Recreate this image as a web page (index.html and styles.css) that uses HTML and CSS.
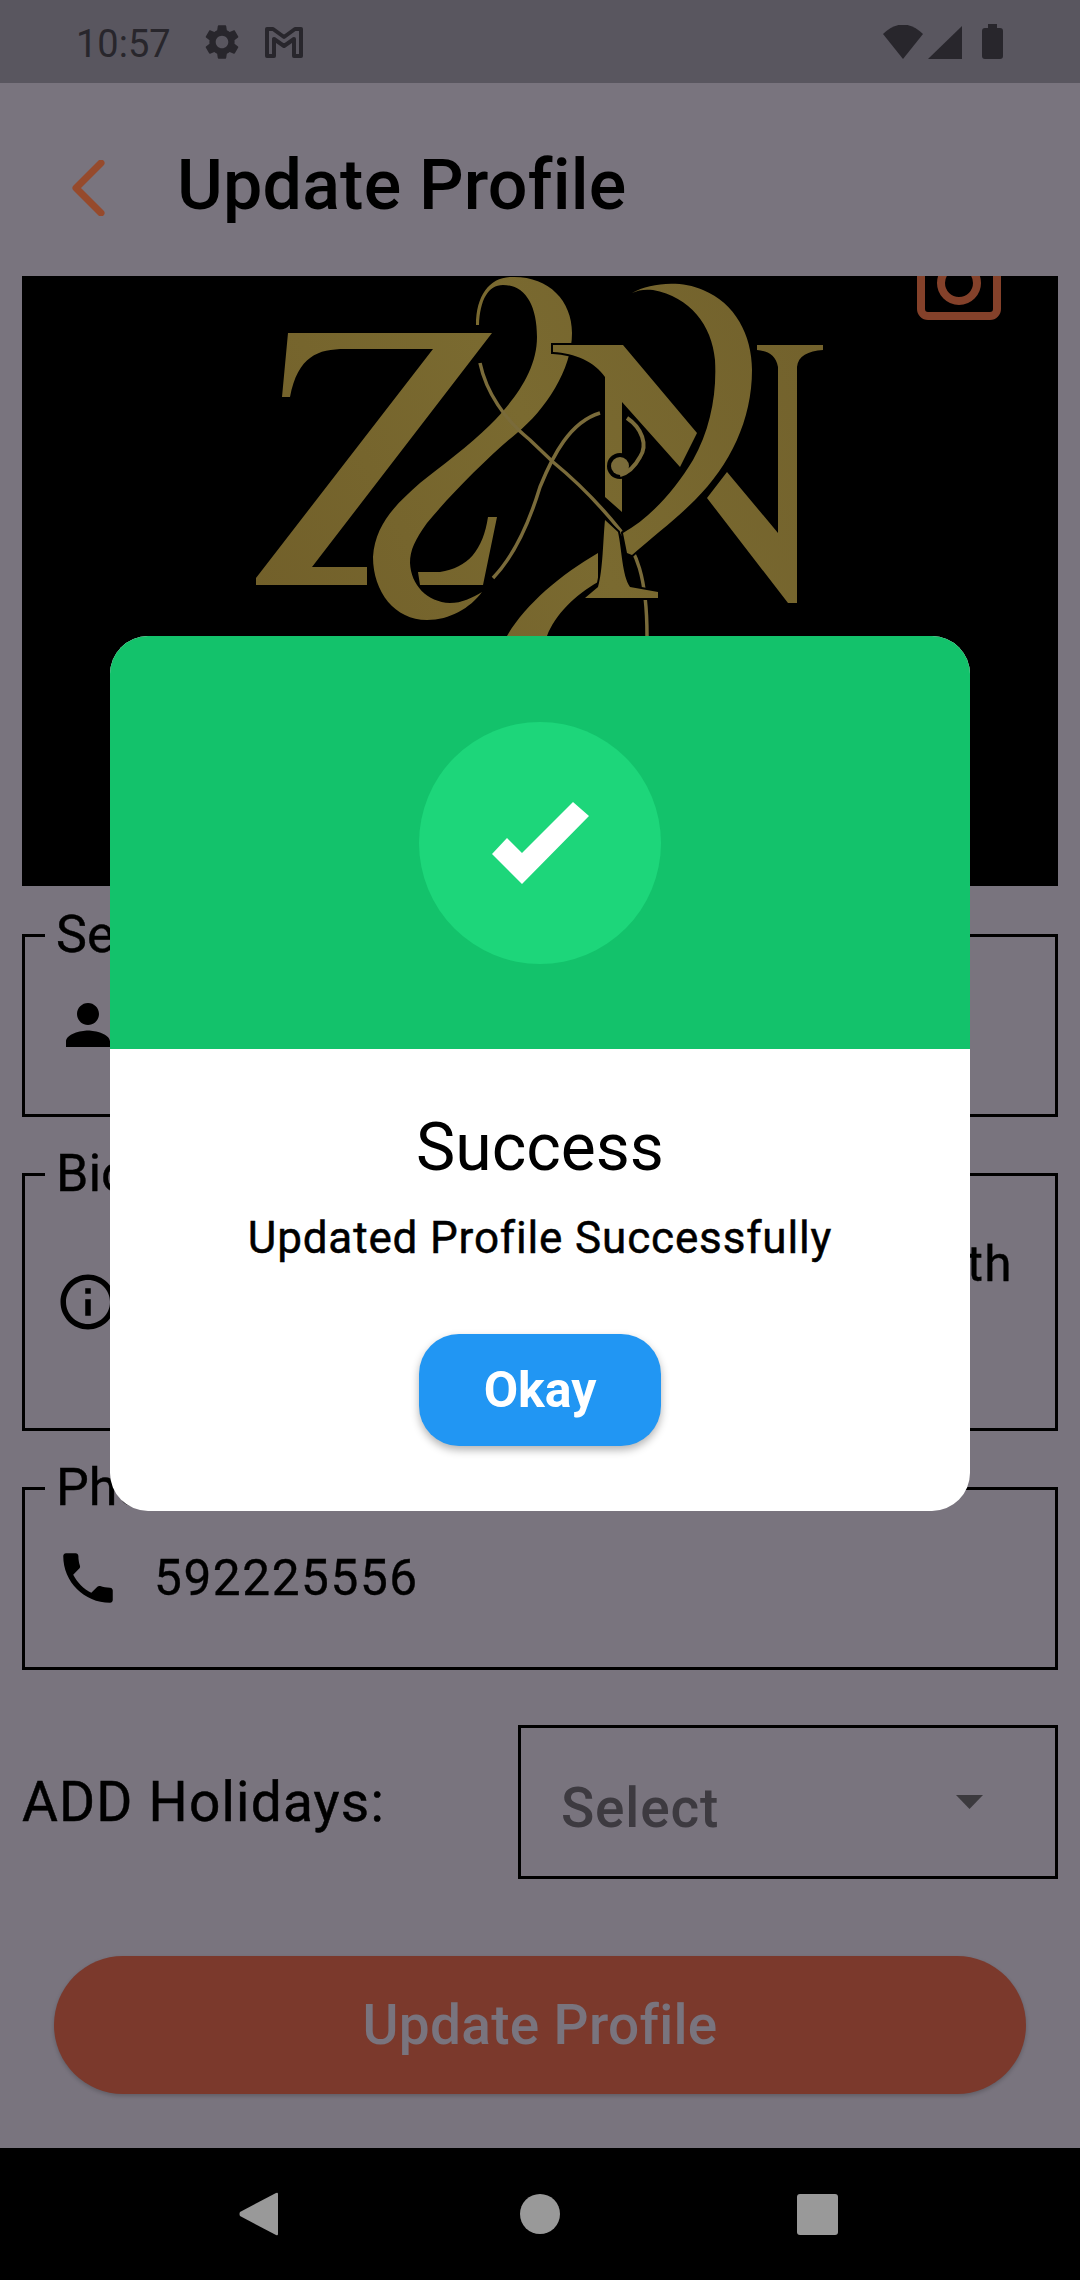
FILE: index.html
```html
<!DOCTYPE html>
<html lang="en">
<head>
<meta charset="UTF-8" />
<title>Update Profile</title>
<link rel="stylesheet" href="styles.css">
</head>
<body>

<div class="screen">

  <!-- Android status bar -->
  <div class="status-bar">
    <span class="clock">10:57</span>
    <svg class="gear" viewBox="0 0 24 24"><path d="M19.14 12.94c.04-.3.06-.61.06-.94 0-.32-.02-.64-.07-.94l2.03-1.58c.18-.14.23-.41.12-.61l-1.92-3.32c-.12-.22-.37-.29-.59-.22l-2.39.96c-.5-.38-1.03-.7-1.62-.94l-.36-2.54c-.04-.24-.24-.41-.48-.41h-3.84c-.24 0-.43.17-.47.41l-.36 2.54c-.59.24-1.13.57-1.62.94l-2.39-.96c-.22-.08-.47 0-.59.22L2.74 8.87c-.12.21-.08.47.12.61l2.03 1.58c-.05.3-.09.63-.09.94s.02.64.07.94l-2.03 1.58c-.18.14-.23.41-.12.61l1.92 3.32c.12.22.37.29.59.22l2.39-.96c.5.38 1.03.7 1.62.94l.36 2.54c.05.24.24.41.48.41h3.84c.24 0 .44-.17.47-.41l.36-2.54c.59-.24 1.13-.56 1.62-.94l2.39.96c.22.08.47 0 .59-.22l1.92-3.32c.12-.22.07-.47-.12-.61l-2.01-1.58zM12 15.6c-1.98 0-3.6-1.62-3.6-3.6s1.62-3.6 3.6-3.6 3.6 1.62 3.6 3.6-1.62 3.6-3.6 3.6z"/></svg>
    <svg class="gmail" viewBox="0 0 40 32"><path d="M3 30V3h6l11 8 11-8h6v27h-7V13l-10 7-10-7v17z"/></svg>
    <div class="status-right">
      <svg class="wifi" viewBox="0 0 40 34"><path d="M0 9Q20-10 40 9L20 34z"/></svg>
      <svg class="signal" viewBox="0 0 34 33"><path d="M34 0v33H0z"/></svg>
      <svg class="battery" viewBox="0 0 21 35"><path d="M6 0h9v4h3q3 0 3 3v25q0 3-3 3H3q-3 0-3-3V7q0-3 3-3h3z"/></svg>
    </div>
  </div>

  <div class="app-bar">
    <svg class="back" viewBox="0 0 34 56"><path d="M30 3L5 28l25 25"/></svg>
    <h1>Update Profile</h1>
  </div>

  <!-- cover picture, logo drawn in page coordinates -->
  <div class="cover">
    <svg class="logo" viewBox="22 276 1036 610">
      <defs>
        <linearGradient id="gold" gradientUnits="userSpaceOnUse" x1="260" y1="600" x2="820" y2="300">
          <stop offset="0" stop-color="#72602a"/>
          <stop offset="0.5" stop-color="#7a6a30"/>
          <stop offset="1" stop-color="#72612c"/>
        </linearGradient>
      </defs>
      <g fill="url(#gold)">
        <!-- Z -->
        <path d="M288 333H492L312 567H367V585H256V578L433 349H345C318 349 298 356 290 397H282z"/>
        <path d="M418 572H440C468 568 483 550 488 517H497L483 585H420z"/>
        <!-- S swash -->
        <path d="M476 325C476 295 490 277 512 277C548 276 572 300 572 333C572 370 545 410 517 433C490 455 450 495 427 523C415 540 410 550 410 563C411 585 427 602 450 603C462 603 472 598 482 592C470 608 450 620 427 620C395 620 373 592 373 557C375 525 395 505 420 483C440 467 470 445 490 425C515 400 537 370 537 337C537 305 525 285 503 285C488 285 480 300 479 325z"/>
        <!-- lower swash -->
        <path d="M598 553V582C575 595 555 615 547 636H507C525 605 560 575 598 553z"/>
      </g>
      <g fill="none" stroke="#7a6b3a" stroke-width="3.500">
        <path d="M480 363C486 392 505 420 530 440L553 462C575 480 600 505 620 530C636 552 647 575 647 636"/>
        <path d="M600 413C570 422 553 455 540 487C530 520 515 555 493 578"/>
      </g>
      <g fill="url(#gold)" stroke="#000" stroke-width="4" paint-order="stroke">
        <!-- N and the stem under it -->
        <path d="M553 345H623L697 433L680 467L622 402V512L605 497V377C595 362 575 353 553 352z"/>
        <path d="M605 520L618 532C622 550 622 575 630 587L658 592V598H585L598 587C603 570 603 540 605 520z"/>
        <path d="M707 498L727 472L778 533V367C776 355 768 351 757 350V345H823V350C808 351 798 356 797 367V603H788z"/>
        <path d="M632 293C650 283 680 280 703 290C735 303 752 335 752 370C752 420 730 465 695 500C675 520 655 535 632 555L627 553L623 533C650 518 675 490 693 460C710 430 717 395 715 360C712 325 690 297 653 290C645 289 638 290 632 293z"/>
      </g>
      <!-- small note inside the N -->
      <circle cx="620" cy="466" r="13" fill="#000"/>
      <path d="M627 418C642 428 648 445 640 457C634 468 628 473 620 475" fill="none" stroke="#7a6b3a" stroke-width="4"/>
      <circle cx="620" cy="466" r="9" fill="#7a6b3a"/>
    </svg>
    <svg class="camera" viewBox="0 0 84 100">
      <rect x="4" y="4" width="76" height="92" rx="7"/>
      <circle cx="42" cy="63" r="18"/>
    </svg>
  </div>

  <fieldset class="field field-short">
    <legend>Services</legend>
    <svg class="field-icon" viewBox="0 0 24 24"><path d="M12 12c2.21 0 4-1.790 4-4s-1.790-4-4-4-4 1.790-4 4 1.790 4 4 4zm0 2c-2.670 0-8 1.340-8 4v2h16v-2c0-2.660-5.330-4-8-4z"/></svg>
  </fieldset>

  <fieldset class="field field-tall">
    <legend>Bio</legend>
    <svg class="field-icon" viewBox="0 0 24 24"><path d="M11 7h2v2h-2zm0 4h2v6h-2zm1-9C6.480 2 2 6.480 2 12s4.480 10 10 10 10-4.480 10-10S17.520 2 12 2zm0 18c-4.410 0-8-3.590-8-8s3.590-8 8-8 8 3.590 8 8-3.590 8-8 8z"/></svg>
    <span class="bio-end">th</span>
  </fieldset>

  <fieldset class="field field-short">
    <legend>Phone</legend>
    <svg class="field-icon" viewBox="0 0 24 24"><path d="M6.620 10.790c1.440 2.830 3.760 5.140 6.590 6.590l2.200-2.200c.270-.270.670-.360 1.020-.240 1.120.370 2.330.570 3.570.570.550 0 1 .450 1 1V20c0 .550-.450 1-1 1-9.390 0-17-7.610-17-17 0-.550.450-1 1-1h3.500c.550 0 1 .450 1 1 0 1.250.200 2.450.570 3.570.110.350.030.740-.250 1.020l-2.200 2.200z"/></svg>
    <span class="field-value">592225556</span>
  </fieldset>

  <div class="holidays">
    <span class="holidays-label">ADD Holidays:</span>
    <div class="select-box">
      <span class="select-text">Select</span>
      <svg class="select-arrow" viewBox="0 0 27 14"><path d="M0 0h27L13.500 14z"/></svg>
    </div>
  </div>

  <div class="update-btn">Update Profile</div>

  <div class="nav-bar">
    <svg class="nav-back" viewBox="0 0 39 44"><path d="M39 2v40q0 2-2 1L1 24q-1-2 0-4L37 1q2-1 2 1z"/></svg>
    <div class="nav-home"></div>
    <div class="nav-recent"></div>
  </div>

  <!-- success dialog -->
  <div class="dialog">
    <div class="dialog-head">
      <div class="tick-circle">
        <svg class="tick" viewBox="0 0 97 82"><path d="M81 0L97 14L30 82L0 52L15 36L30 51z"/></svg>
      </div>
    </div>
    <div class="dialog-body">
      <div class="dialog-title">Success</div>
      <div class="dialog-msg">Updated Profile Successfully</div>
      <div class="okay-btn">Okay</div>
    </div>
  </div>

</div>

</body>
</html>
```

FILE: styles.css
```css
* {
  box-sizing: border-box;
}
body {
  margin: 0;
  font-family: Roboto, "Noto Sans", sans-serif;
  color: #000;
}
.screen {
  position: relative;
  width: 1080px;
  height: 2280px;
  display: flex;
  flex-direction: column;
  background: #79747e;
  overflow: hidden;
}

/* status bar */
.status-bar {
  height: 83px;
  flex: none;
  display: flex;
  align-items: center;
  padding: 0 77px 0 76px;
  background: #59565f;
  color: #28262c;
}
.clock {
  padding-top: 6px;
  font-size: 38px;
  line-height: 77px;
}
.gear {
  width: 42px;
  height: 42px;
  margin-left: 30px;
  fill: #28262c;
}
.gmail {
  width: 40px;
  height: 32px;
  margin-left: 21px;
  fill: none;
  stroke: #28262c;
  stroke-width: 4;
  stroke-linejoin: round;
}
.status-right {
  margin-left: auto;
  display: flex;
  align-items: flex-end;
  height: 35px;
  margin-top: -1px;
}
.status-right svg {
  fill: #28262c;
}
.wifi {
  width: 40px;
  height: 34px;
}
.signal {
  width: 34px;
  height: 33px;
  margin-left: 5px;
}
.battery {
  width: 21px;
  height: 35px;
  margin-left: 20px;
}

/* app bar */
.app-bar {
  height: 193px;
  flex: none;
  display: flex;
  align-items: center;
  padding: 16px 0 0 71px;
}
.back {
  width: 34px;
  height: 56px;
  fill: none;
  stroke: #964a2c;
  stroke-width: 7;
  stroke-linecap: round;
  stroke-linejoin: round;
}
.app-bar h1 {
  margin: 0 0 6px 72px;
  font-size: 70px;
  font-weight: 500;
  line-height: 80px;
  letter-spacing: 0.2px;
}

/* cover */
.cover {
  position: relative;
  flex: none;
  height: 610px;
  margin: 0 22px;
  background: #000;
  overflow: hidden;
}
.logo {
  position: absolute;
  left: 0;
  top: 0;
  width: 100%;
  height: 100%;
}
.camera {
  position: absolute;
  right: 57px;
  top: -56px;
  width: 84px;
  height: 100px;
  fill: none;
  stroke: #84412a;
  stroke-width: 8;
}

/* outlined fields */
.field {
  flex: none;
  display: flex;
  align-items: center;
  min-width: 0;
  margin: 28px 22px 0;
  padding: 28px 42px 0 30px;
  border: 3px solid #000;
}
.field legend {
  margin-left: -10px;
  padding: 0 8px 0 11px;
  font-size: 52px;
  line-height: 58px;
  -webkit-text-stroke: 0.4px #000;
}
.field-short {
  height: 211px;
}
.field-tall {
  height: 286px;
  padding-top: 66px;
  align-items: flex-start;
}
.cover + .field {
  margin-top: 20px;
}
.field-icon {
  width: 66px;
  height: 66px;
  flex: none;
}
.field-value {
  margin-left: 33px;
  font-size: 49.5px;
  letter-spacing: 1.6px;
  -webkit-text-stroke: 0.4px #000;
}
.bio-end {
  margin: -34px 0 0 auto;
  font-size: 49.5px;
  line-height: 58px;
  letter-spacing: 1.375px;
  -webkit-text-stroke: 0.4px #000;
}

/* holidays row */
.holidays {
  flex: none;
  height: 154px;
  margin: 55px 22px 0;
  display: flex;
  align-items: center;
}
.holidays-label {
  width: 496px;
  font-size: 55px;
  letter-spacing: 1.2px;
  -webkit-text-stroke: 0.5px #000;
}
.select-box {
  width: 540px;
  height: 154px;
  display: flex;
  align-items: center;
  justify-content: space-between;
  padding: 0 72px 0 40px;
  border: 3px solid #000;
}
.select-text {
  padding-top: 12px;
  font-size: 55px;
  font-weight: 500;
  letter-spacing: 0.8px;
  color: #3d3a40;
}
.select-arrow {
  width: 27px;
  height: 14px;
  fill: #3c3a3e;
}

.update-btn {
  flex: none;
  height: 138px;
  margin: 77px 54px 0;
  display: flex;
  align-items: center;
  justify-content: center;
  border-radius: 69px;
  background: #7b392c;
  box-shadow: 0 2px 4px rgba(0,0,0,0.2);
  color: #79747e;
  font-size: 55px;
  font-weight: 500;
  letter-spacing: 0.3px;
}

/* navigation bar */
.nav-bar {
  height: 132px;
  margin-top: auto;
  flex: none;
  display: flex;
  align-items: center;
  padding-left: 239px;
  background: #000;
}
.nav-back {
  width: 39px;
  height: 44px;
  fill: #999;
}
.nav-home {
  width: 40px;
  height: 40px;
  margin-left: 242px;
  border-radius: 50%;
  background: #999;
}
.nav-recent {
  width: 41px;
  height: 41px;
  margin-left: 237px;
  border-radius: 3px;
  background: #999;
}

/* dialog */
.dialog {
  position: absolute;
  left: 110px;
  top: 636px;
  width: 860px;
  height: 875px;
  display: flex;
  flex-direction: column;
  border-radius: 38px;
  background: #fff;
  overflow: hidden;
}
.dialog-head {
  height: 413px;
  flex: none;
  display: flex;
  align-items: center;
  justify-content: center;
  background: #13c26b;
}
.tick-circle {
  width: 242px;
  height: 242px;
  display: flex;
  align-items: center;
  justify-content: center;
  border-radius: 50%;
  background: #1dd67a;
}
.tick {
  width: 97px;
  height: 82px;
  fill: #fff;
}
.dialog-body {
  display: flex;
  flex-direction: column;
  align-items: center;
  padding-top: 60px;
}
.dialog-title {
  font-size: 66px;
  line-height: 78px;
}
.dialog-msg {
  margin-top: 25px;
  font-size: 44px;
  line-height: 52px;
  letter-spacing: 0.85px;
  -webkit-text-stroke: 0.5px #000;
}
.okay-btn {
  width: 242px;
  height: 112px;
  margin-top: 70px;
  display: flex;
  align-items: center;
  justify-content: center;
  border-radius: 40px;
  background: #2196f3;
  box-shadow: 0 4px 8px rgba(0,0,0,0.3);
  color: #fff;
  font-size: 50px;
  font-weight: 700;
}
```
